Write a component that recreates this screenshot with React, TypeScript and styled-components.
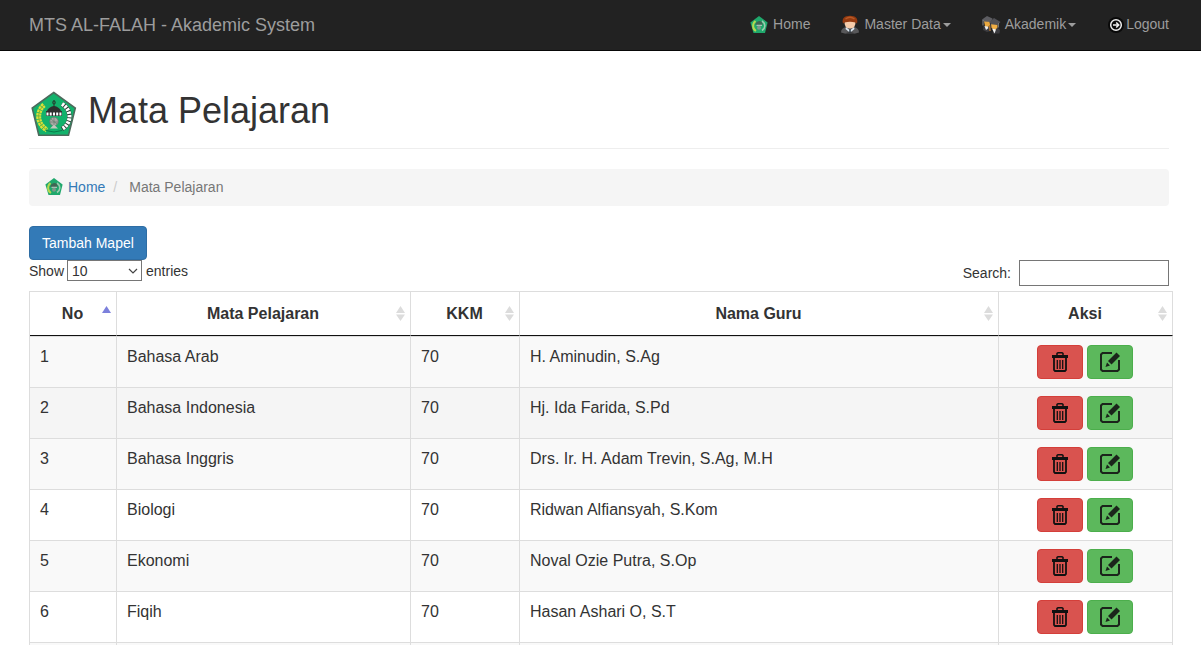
import React from "react";
import styled, { createGlobalStyle } from "styled-components";

const GlobalStyle = createGlobalStyle`
  *, *::before, *::after { box-sizing: border-box; }
  body {
    margin: 0;
    background: #fff;
    color: #333;
    font-family: "Liberation Sans", Arial, sans-serif;
    font-size: 14px;
    line-height: 20px;
  }
`;

const Page = styled.div`
  height: 100vh;
  overflow: hidden;
`;

const Navbar = styled.header`
  display: flex;
  justify-content: space-between;
  align-items: center;
  min-height: 51px;
  padding: 0 32px 0 29px;
  background: #222;
  border-bottom: 1px solid #080808;
`;

const Brand = styled.a`
  color: #9d9d9d;
  font-size: 18px;
  text-decoration: none;
`;

const NavLinks = styled.nav`
  display: flex;
  gap: 30px;
  padding-bottom: 2px;
`;

const NavLink = styled.a<{ $gap?: number }>`
  display: flex;
  align-items: center;
  gap: ${(p) => p.$gap ?? 4}px;
  color: #9d9d9d;
  text-decoration: none;
  white-space: nowrap;

  svg {
    margin-top: 2px;
  }
`;

const CaretLabel = styled.span`
  display: flex;
  align-items: center;
  gap: 2px;
`;

const Caret = styled.span`
  margin-top: 2px;
  border: 4px solid transparent;
  border-top-color: #9d9d9d;
  border-bottom: 0;
`;

const Main = styled.main`
  padding: 39px 32px 0 29px;
`;

const PageHeader = styled.div`
  display: flex;
  align-items: flex-start;
  gap: 9px;
  padding-bottom: 8px;
  border-bottom: 1px solid #eee;
`;

const Title = styled.h1`
  margin: 0;
  font-size: 36px;
  font-weight: 400;
  line-height: 42px;
`;

const Breadcrumb = styled.nav`
  display: flex;
  align-items: center;
  margin: 20px 0;
  padding: 7px 15px 8px;
  height: 37px;
  border-radius: 4px;
  background: #f5f5f5;
  color: #777;
`;

const CrumbLink = styled.a`
  display: flex;
  align-items: center;
  gap: 4px;
  color: #337ab7;
  text-decoration: none;
`;

const Slash = styled.span`
  padding: 0 12px 0 8px;
  color: #ccc;
`;

const AddButton = styled.button`
  display: block;
  height: 34px;
  padding: 0 12px;
  border: 1px solid #2e6da4;
  border-radius: 4px;
  background: #337ab7;
  color: #fff;
  font: inherit;
`;

const Controls = styled.div`
  display: flex;
  justify-content: space-between;
  align-items: flex-start;
  height: 31px;
`;

const Length = styled.label`
  display: flex;
  align-items: center;
  gap: 4px;
`;

const SelectBox = styled.span`
  position: relative;
  display: flex;
  margin-left: -1px;

  svg {
    position: absolute;
    right: 4px;
    top: 8px;
    pointer-events: none;
  }
`;

const Select = styled.select`
  appearance: none;
  width: 75px;
  height: 21px;
  padding: 0 4px;
  border: 1px solid #767676;
  border-radius: 0;
  background: #fff;
  color: #333;
  font: inherit;
`;

const Search = styled.label`
  display: flex;
  align-items: center;
  gap: 8px;
`;

const SearchInput = styled.input`
  width: 150px;
  height: 26px;
  padding: 1px 4px;
  border: 1px solid #767676;
  font: inherit;
`;

const TableWrap = styled.div`
  margin-right: -4px;
`;

const Table = styled.table`
  width: 100%;
  table-layout: fixed;
  border-collapse: separate;
  border-spacing: 0;
  border-top: 1px solid #ddd;
  border-left: 1px solid #ddd;
  font-size: 16px;
  line-height: 23px;
`;

const Col = styled.col<{ $width?: number }>`
  width: ${(p) => (p.$width ? p.$width + "px" : "auto")};
`;

const HeadCell = styled.th`
  position: relative;
  height: 44px;
  padding: 10px 18px 10px 17px;
  border-right: 1px solid #ddd;
  border-bottom: 1px solid #111;
  text-align: center;
`;

const SortMark = styled.svg`
  position: absolute;
  right: 5px;
  top: 14px;
`;

const Row = styled.tr<{ $tone: string }>`
  background: ${(p) => p.$tone};
`;

const Cell = styled.td`
  height: 51px;
  padding: 8px 11px 8px 10px;
  border-top: 1px solid #ddd;
  border-right: 1px solid #ddd;
  text-align: left;
  vertical-align: top;
`;

const Actions = styled.div`
  display: flex;
  justify-content: center;
  gap: 4px;
`;

const ActionButton = styled.button<{ $danger?: boolean }>`
  display: flex;
  align-items: center;
  justify-content: center;
  width: 46px;
  height: 34px;
  padding: 0;
  border: 1px solid ${(p) => (p.$danger ? "#d43f3a" : "#4cae4c")};
  border-radius: 4px;
  background: ${(p) => (p.$danger ? "#d9534f" : "#5cb85c")};
`;

const Emblem = ({ size }: { size: number }) => (
  <svg width={size} height={size} viewBox="-1 -1 50 50" aria-hidden="true">
    <path d="M23.7 1.5 45.3 17 38.5 44.2H8.8L2.2 17Z" fill="#12b26b" stroke="#4d6a5c" strokeWidth="1.6" />
    <path d="M14 14C6 21 7 33 17 39" fill="none" stroke="#d8e03a" strokeWidth="5" strokeDasharray="2.6 .6" />
    <path d="M14 14C6 21 7 33 17 39" fill="none" stroke="#7ea82c" strokeWidth=".8" />
    <path d="M32 13C42 19 42 32 32 38" fill="none" stroke="#2d3a33" strokeWidth="4.4" />
    <path d="M32 13C42 19 42 32 32 38" fill="none" stroke="#fff" strokeWidth="4" strokeDasharray="2.4 1" />
    <path d="M24 9v8" stroke="#26352d" strokeWidth="1" />
    <circle cx="24" cy="11.5" r="1.5" fill="none" stroke="#26352d" strokeWidth=".8" />
    <path d="M17 20.500c0-2 3-5 7-5.500 4 .5 7 3.500 7 5.500Z" fill="#2d302e" />
    <path d="M16 20h16v5H16Z" fill="#2d302e" />
    <path d="M17.500 21.500v3M20.700 21.500v3M24 21.500v3M27.200 21.500v3M30.400 21.500v3" stroke="#fff" strokeWidth="2" />
    <circle cx="24" cy="30.500" r="4.300" fill="#a9aaa5" stroke="#66756c" strokeWidth=".7" />
    <path d="M20 31h8M24 26.500v8M21 28l6 5" stroke="#697d70" strokeWidth=".7" />
    <path d="m20 37.500 4-4 4 4Z" fill="#c3c5bd" />
    <path d="M16 39.500q8 3 16 0" fill="none" stroke="#087b49" strokeWidth="1" />
  </svg>
);

const SmallEmblem = () => (
  <svg width="20" height="20" viewBox="0 0 20 20" aria-hidden="true">
    <path d="M10 1 18.600 7.500 16 18H4.500L1.400 7.500Z" fill="#1fa86c" />
    <path d="M6.500 6C3 9 3.500 14 7 16" fill="none" stroke="#b4d850" strokeWidth="2" />
    <path d="M13 6c4 3 3.500 7 0 9.500" fill="none" stroke="#9ccbb0" strokeWidth="1.600" />
    <path d="M6.500 9Q7 6.500 10 6t3.500 3v1h-7Z" fill="#3f6654" />
    <path d="M7.500 10.300h5.500" stroke="#b9cbc1" strokeWidth="1.100" />
    <circle cx="10" cy="12.800" r="2" fill="#80978a" />
  </svg>
);

const UserIcon = () => (
  <svg width="20" height="20" viewBox="0 0 20 20" aria-hidden="true">
    <path d="M1 17.500q0-5 6-5.500h6q6 .5 6 5.500-9 3-18 0Z" fill="#58585a" />
    <path d="M5 18.500q5-3 10 0-5 1-10 0Z" fill="#39393b" />
    <path d="m6 12 4 3.500 4-3.500 .5 2-3 2.500h-3l-3-2.500Z" fill="#dce8f2" />
    <path d="M10 14.500v3" stroke="#2c3a45" strokeWidth="1.400" />
    <path d="M4.500 6h11q.5 7.500-5.500 7.500T4.500 6Z" fill="#f6cba9" />
    <path d="M3 8.500C1.500 3.500 4.500.8 10 .8s8.500 2.700 7 7.700l-1.500-1q-5.500-1.500-11 0Z" fill="#943a10" />
    <path d="M5.500 4q4.500-3.500 9 0" fill="none" stroke="#b85a28" strokeWidth="1.300" />
  </svg>
);

const StudentsIcon = () => (
  <svg width="20" height="20" viewBox="0 0 20 20" aria-hidden="true">
    <path d="M2.500 11 2 15l4 2 4-1V9ZM13 13l-1.500 5.500h7L19 15l-3-3Z" fill="#3c3c40" />
    <path d="M3 6h5.500l.5 4-2.500 2.500L4 11Z" fill="#e9a83f" />
    <path d="m3.500 11 1.500 4 2.500-2-1-1.500Z" fill="#eee" />
    <path d="M10 8.500h6.500v4L14 15l-3.500-2Z" fill="#f0ae45" />
    <path d="m11 13.500 2.500 5 1.500-4Z" fill="#f3f3f3" />
    <path d="M8.500 10 9 16" stroke="#b9772b" strokeWidth="1.200" />
    <path d="m1 4.500 5-3.500 5.500 2.500-1.500 3.500-7-.5Z" fill="#5d5d62" />
    <path d="m8.500 7 4.500-4 6.500 4-3 3-6.500-.8Z" fill="#515156" />
    <path d="M2 5v5.500" stroke="#96969a" strokeWidth=".9" />
    <path d="M17.500 8v4.500" stroke="#77777b" strokeWidth=".9" />
  </svg>
);

const LogoutIcon = () => (
  <svg width="20" height="20" viewBox="0 0 20 20" aria-hidden="true">
    <circle cx="10" cy="10" r="8" fill="#090909" />
    <circle cx="10" cy="10" r="5.300" fill="none" stroke="#eee" strokeWidth="1.500" />
    <path d="M7 10h5.500M10.200 7.500l2.500 2.500-2.500 2.500" fill="none" stroke="#eee" strokeWidth="1.600" />
  </svg>
);

const TrashIcon = () => (
  <svg width="16" height="20" viewBox="0 0 16 20" aria-hidden="true">
    <path d="M5 3V1.500L6 .8h4l1 .7V3" fill="none" stroke="#111" strokeWidth="1.500" />
    <path d="M0 3h16v3H0Z" fill="#111" />
    <path d="M2 5v13l1 1h10l1-1V5" fill="none" stroke="#111" strokeWidth="1.800" />
    <path d="M5.300 8v9M8 8v9M10.700 8v9" stroke="#111" strokeWidth="1.300" />
  </svg>
);

const EditIcon = () => (
  <svg width="20" height="20" viewBox="0 0 20 20" aria-hidden="true">
    <path d="M12 1H2.500L1 2.500v15L2.500 19h15l1.500-1.500V8" fill="none" stroke="#1b241b" strokeWidth="2" />
    <path d="m8 9 8.500-8.500L20 4l-8.500 8.500Z" fill="#1b241b" />
    <path d="m7 10.500 3 3L5.500 15Z" fill="#1b241b" />
  </svg>
);

const SortArrows = ({ ascending }: { ascending?: boolean }) => (
  <SortMark width="9" height="16" viewBox="0 0 9 16" aria-hidden="true">
    <path d="M4.500 0 9 7H0Z" fill={ascending ? "#7c80dc" : "#dcdcdc"} />
    {!ascending && <path d="M0 8.500h9l-4.500 6.500Z" fill="#dcdcdc" />}
  </SortMark>
);

const columns: { label: string; width?: number }[] = [
  { label: "No", width: 87 },
  { label: "Mata Pelajaran", width: 294 },
  { label: "KKM", width: 109 },
  { label: "Nama Guru" },
  { label: "Aksi", width: 174 },
];

const subjects = [
  { name: "Bahasa Arab", kkm: 70, teacher: "H. Aminudin, S.Ag", tone: "#f9f9f9" },
  { name: "Bahasa Indonesia", kkm: 70, teacher: "Hj. Ida Farida, S.Pd", tone: "#f5f5f5" },
  { name: "Bahasa Inggris", kkm: 70, teacher: "Drs. Ir. H. Adam Trevin, S.Ag, M.H", tone: "#f9f9f9" },
  { name: "Biologi", kkm: 70, teacher: "Ridwan Alfiansyah, S.Kom", tone: "#fff" },
  { name: "Ekonomi", kkm: 70, teacher: "Noval Ozie Putra, S.Op", tone: "#f9f9f9" },
  { name: "Fiqih", kkm: 70, teacher: "Hasan Ashari O, S.T", tone: "#fff" },
];

export default function App() {
  return (
    <Page>
      <GlobalStyle />
      <Navbar>
        <Brand href="#">MTS AL-FALAH - Akademic System</Brand>
        <NavLinks>
          <NavLink href="#"><SmallEmblem />Home</NavLink>
          <NavLink href="#"><UserIcon /><CaretLabel>Master Data<Caret /></CaretLabel></NavLink>
          <NavLink href="#"><StudentsIcon /><CaretLabel>Akademik<Caret /></CaretLabel></NavLink>
          <NavLink href="#" $gap={0}><LogoutIcon />Logout</NavLink>
        </NavLinks>
      </Navbar>
      <Main>
        <PageHeader>
          <Emblem size={50} />
          <Title>Mata Pelajaran</Title>
        </PageHeader>
        <Breadcrumb>
          <CrumbLink href="#"><SmallEmblem />Home</CrumbLink>
          <Slash>/</Slash>
          <span>Mata Pelajaran</span>
        </Breadcrumb>
        <AddButton type="button">Tambah Mapel</AddButton>
        <Controls>
          <Length>
            Show
            <SelectBox>
              <Select defaultValue="10">
                <option>10</option>
              </Select>
              <svg width="10" height="7" viewBox="0 0 10 7" aria-hidden="true">
                <path d="m1 1 4 4 4-4" fill="none" stroke="#444" strokeWidth="1.200" />
              </svg>
            </SelectBox>
            entries
          </Length>
          <Search>
            Search:
            <SearchInput type="search" />
          </Search>
        </Controls>
        <TableWrap>
          <Table>
            <colgroup>
              {columns.map((c) => <Col key={c.label} $width={c.width} />)}
            </colgroup>
            <thead>
              <tr>
                {columns.map((c, i) => (
                  <HeadCell key={c.label} scope="col">
                    {c.label}
                    <SortArrows ascending={i === 0} />
                  </HeadCell>
                ))}
              </tr>
            </thead>
            <tbody>
              {subjects.map((s, i) => (
                <Row key={s.name} $tone={s.tone}>
                  <Cell>{i + 1}</Cell>
                  <Cell>{s.name}</Cell>
                  <Cell>{s.kkm}</Cell>
                  <Cell>{s.teacher}</Cell>
                  <Cell>
                    <Actions>
                      <ActionButton type="button" $danger aria-label="Hapus"><TrashIcon /></ActionButton>
                      <ActionButton type="button" aria-label="Edit"><EditIcon /></ActionButton>
                    </Actions>
                  </Cell>
                </Row>
              ))}
              <Row $tone="#f9f9f9">
                {columns.map((c) => <Cell key={c.label} />)}
              </Row>
            </tbody>
          </Table>
        </TableWrap>
      </Main>
    </Page>
  );
}
